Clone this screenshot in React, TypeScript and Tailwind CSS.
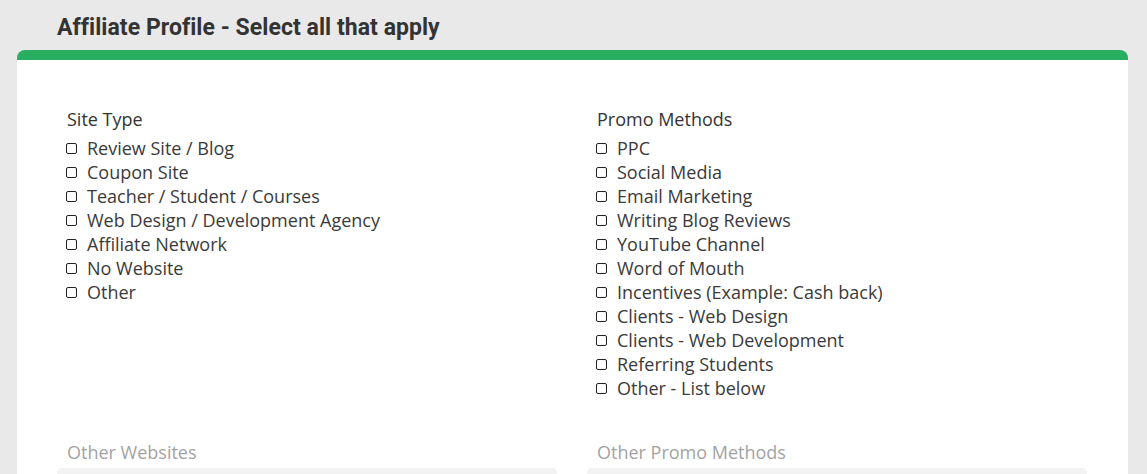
const siteTypes = [
  "Review Site / Blog",
  "Coupon Site",
  "Teacher / Student / Courses",
  "Web Design / Development Agency",
  "Affiliate Network",
  "No Website",
  "Other",
];

const promoMethods = [
  "PPC",
  "Social Media",
  "Email Marketing",
  "Writing Blog Reviews",
  "YouTube Channel",
  "Word of Mouth",
  "Incentives (Example: Cash back)",
  "Clients - Web Design",
  "Clients - Web Development",
  "Referring Students",
  "Other - List below",
];

const CheckGroup = ({ title, items }: { title: string; items: string[] }) => {
  return (
    <div className="pl-[10px]">
      <div className="text-[18px] leading-[24px] text-[#333] mb-[5px]">{title}</div>
      <ul>
        {items.map((item) => (
          <li key={item} className="flex items-center h-[24px]">
            <span className="w-[11px] h-[11px] border border-[#222] rounded-[2px] ml-[-1px] mr-[10px] mt-px shrink-0" />
            <span className="text-[18px] leading-[24px] text-[#3a3a3a]">{item}</span>
          </li>
        ))}
      </ul>
    </div>
  );
};

const OtherField = ({ label }: { label: string }) => {
  return (
    <div>
      <div className="pl-[10px] text-[18px] leading-[24px] text-[#a3a3a3]">{label}</div>
      <div className="mt-[4px] h-[40px] bg-[#f2f2f2] rounded-[5px]" />
    </div>
  );
};

export default function App() {
  return (
    <div
      className="h-screen bg-[#e9e9e9] overflow-hidden"
      style={{ fontFamily: '"Open Sans", sans-serif' }}
    >
      <h1
        className="pl-[57px] pt-[13px] h-[30px] box-content leading-[30px] text-[23px] font-bold text-[#333] mb-[7px] tracking-[0.05px]"
        style={{ fontFamily: 'Roboto, sans-serif' }}
      >
        Affiliate Profile - Select all that apply
      </h1>
      <div className="ml-[17px] w-[1111px] bg-white rounded-t-[8px] border-t-[10px] border-[#27ae60] px-[40px] pt-[47px] pb-10">
        <div className="grid grid-cols-[500px_500px] gap-x-[30px]">
          <CheckGroup title="Site Type" items={siteTypes} />
          <CheckGroup title="Promo Methods" items={promoMethods} />
        </div>
        <div className="grid grid-cols-[500px_500px] gap-x-[30px] mt-[40px]">
          <OtherField label="Other Websites" />
          <OtherField label="Other Promo Methods" />
        </div>
      </div>
    </div>
  );
}
